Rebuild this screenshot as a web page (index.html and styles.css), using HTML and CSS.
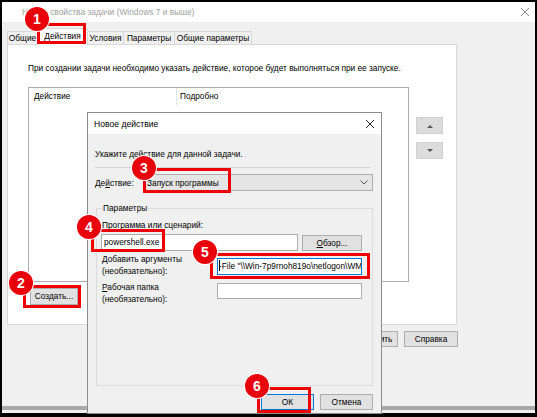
FILE: index.html
```html
<!DOCTYPE html>
<html lang="ru">
<head>
<meta charset="utf-8">
<title>Новое действие</title>
<link rel="stylesheet" href="styles.css">
</head>
<body>
<div class="screen">
  <div class="win">
    <div class="titlebar">
      <span class="title">Новые свойства задачи (Windows 7 и выше)</span>
      <svg class="x" width="10" height="10" viewBox="0 0 10 10"><path d="M1 1L9 9M9 1L1 9" stroke="#8a8a8a" stroke-width="1"/></svg>
    </div>
    <div class="body">
      <div class="tabs">
        <div class="tab t1">Общие</div>
        <div class="tab t2 active">Действия</div>
        <div class="tab t3">Условия</div>
        <div class="tab t4">Параметры</div>
        <div class="tab t5">Общие параметры</div>
      </div>
      <div class="panel">
        <p class="hint">При создании задачи необходимо указать действие, которое будет выполняться при ее запуске.</p>
        <div class="panel-row">
          <div class="list">
            <div class="list-head">
              <span class="col1">Действие</span>
              <span class="col2">Подробно</span>
            </div>
          </div>
          <div class="arrows">
            <div class="arrow-btn"><svg width="6" height="4" viewBox="0 0 6 4"><path d="M0 4L3 1L6 4Z" fill="#555"/></svg></div>
            <div class="arrow-btn"><svg width="6" height="4" viewBox="0 0 6 4"><path d="M0 0L3 3L6 0Z" fill="#555"/></svg></div>
          </div>
        </div>
        <div class="create-row">
          <div class="btn create">Создать...</div>
        </div>
      </div>
      <div class="footer">
        <div class="btn fbtn">ОК</div>
        <div class="btn fbtn">Отмена</div>
        <div class="btn fbtn">Применить</div>
        <div class="btn fbtn">Справка</div>
      </div>
      <div class="spacer"></div>
      <div class="band"></div>
    </div>
  </div>

  <div class="dialog">
    <div class="dlg-title">
      <span>Новое действие</span>
      <svg width="10" height="10" viewBox="0 0 10 10"><path d="M1 1L9 9M9 1L1 9" stroke="#222" stroke-width="1"/></svg>
    </div>
    <div class="dlg-body">
      <p class="instr">Укажите действие для данной задачи.</p>
      <div class="sep"></div>
      <div class="action-row">
        <span class="action-label">Де<u>й</u>ствие:</span>
        <div class="combo">
          <span>Запуск программы</span>
          <svg width="8" height="5" viewBox="0 0 8 5"><path d="M0.5 0.5L4 4L7.5 0.5" stroke="#555" fill="none" stroke-width="1"/></svg>
        </div>
      </div>
      <fieldset class="group">
        <legend>Параметры</legend>
        <div class="lbl">Программа или сценарий:</div>
        <div class="prog-row">
          <div class="input in1">powershell.exe</div>
          <div class="btn browse"><u>О</u>бзор...</div>
        </div>
        <div class="arg-row">
          <div class="lbl2"><u>Д</u>обавить аргументы<br>(необязательно):</div>
          <div class="input in2"><span class="caret"></span>-File "\\Win-7p9rnoh819o\netlogon\WM</div>
        </div>
        <div class="work-row">
          <div class="lbl2"><u>Р</u>абочая папка<br>(необязательно):</div>
          <div class="input in3"></div>
        </div>
      </fieldset>
      <div class="dlg-footer">
        <div class="btn ok">ОК</div>
        <div class="btn cancel">Отмена</div>
      </div>
    </div>
  </div>

  <div class="mark m1"></div>
  <div class="mark m2"></div>
  <div class="mark m3"></div>
  <div class="mark m4"></div>
  <div class="mark m5"></div>
  <div class="mark m6"></div>

  <div class="badge b1">1</div>
  <div class="badge b2">2</div>
  <div class="badge b3">3</div>
  <div class="badge b4">4</div>
  <div class="badge b5">5</div>
  <div class="badge b6">6</div>
</div>
</body>
</html>
```

FILE: styles.css
```css
* { box-sizing: border-box; margin: 0; padding: 0; }
html, body { width: 537px; height: 417px; overflow: hidden; }
body {
  background: #000;
  font-family: "Liberation Sans", Arial, sans-serif;
  font-size: 8.3px;
  color: #000;
}
u { text-decoration: underline; text-underline-offset: 1px; }

.screen {
  position: relative;
  width: 537px;
  height: 417px;
  padding: 2px 2px 4px 2px;
}
.win {
  height: 100%;
  background: #f0f0f0;
  display: flex;
  flex-direction: column;
}
.titlebar {
  height: 20px;
  flex: none;
  background: #fff;
  display: flex;
  align-items: center;
  justify-content: space-between;
  padding: 0 5px 0 20px;
  color: #a0a0a0;
  font-size: 8.4px;
}
.body {
  flex: 1;
  padding: 6px 0 0 5px;
  display: flex;
  flex-direction: column;
}

/* tabs */
.tabs {
  display: flex;
  align-items: flex-end;
  height: 16px;
  position: relative;
  z-index: 1;
}
.tab {
  height: 13px;
  line-height: 12px;
  border: 1px solid #d9d9d9;
  border-bottom: none;
  margin-right: -1px;
  background: #f0f0f0;
  text-align: center;
  white-space: nowrap;
}
.tab.t1 { width: 31px; }
.tab.t2 { width: 51px; }
.tab.t3 { width: 37px; }
.tab.t4 { width: 52px; }
.tab.t5 { width: 78px; }
.tab.active {
  line-height: 15px;
  background: #fff;
  margin-bottom: -1px;
  height: 17px;
}

.panel {
  width: 450px;
  height: 281px;
  background: #fff;
  border: 1px solid #d9d9d9;
  padding: 17px 0 0 20px;
  flex: none;
}
.hint { line-height: 12px; }
.panel-row {
  display: flex;
  margin-top: 13px;
}
.list {
  width: 381px;
  height: 195px;
  border: 1px solid #adadad;
  background: #fff;
}
.list-head {
  display: flex;
  height: 17px;
  line-height: 17px;
}
.col1 { width: 148px; padding-left: 5px; border-right: 1px solid #e5e5e5; }
.col2 { padding-left: 3px; }
.arrows {
  margin: 30px 0 0 7px;
  display: flex;
  flex-direction: column;
  gap: 8px;
}
.arrow-btn {
  width: 27px;
  height: 17px;
  background: #dcdcdc;
  border: 1px solid #d0d0d0;
  display: flex;
  align-items: center;
  justify-content: center;
}
.create-row {
  display: flex;
  margin-top: 6px;
  margin-left: 2px;
}

.btn {
  height: 17px;
  line-height: 15px;
  background: #e1e1e1;
  border: 1px solid #adadad;
  text-align: center;
  padding: 0 3px;
  white-space: nowrap;
}
.create { width: 48px; }

.footer {
  display: flex;
  justify-content: flex-end;
  gap: 6px;
  width: 451px;
  margin-top: 6px;
}
.fbtn { width: 54px; height: 16px; line-height: 14px; }
.spacer { flex: 1; }
.band {
  height: 4px;
  background: #a8a8a8;
  margin-left: -5px;
  margin-bottom: 3px;
}

/* dialog */
.dialog {
  position: absolute;
  left: 87px;
  top: 112px;
  width: 295px;
  height: 302px;
  background: #f0f0f0;
  border: 1px solid #8c8c8c;
  display: flex;
  flex-direction: column;
  z-index: 2;
}
.dlg-title {
  height: 21px;
  flex: none;
  background: #fff;
  display: flex;
  align-items: center;
  justify-content: space-between;
  padding: 0 6px 0 6px;
  font-size: 8.6px;
}
.dlg-body {
  flex: 1;
  padding: 14px 0 0 7px;
  display: flex;
  flex-direction: column;
}
.instr { line-height: 12px; }
.sep {
  margin-top: 7px;
  width: 275px;
  border-top: 1px solid #d4d4d4;
}
.action-row {
  display: flex;
  align-items: center;
  margin-top: 6px;
}
.action-label { width: 48px; }
.combo {
  width: 230px;
  height: 17px;
  background: #e5e5e5;
  border: 1px solid #adadad;
  display: flex;
  align-items: center;
  justify-content: space-between;
  padding: 0 4px 0 3px;
}
.group {
  margin: 11px 0 0 1px;
  width: 277px;
  height: 184px;
  border: 1px solid #dcdcdc;
  padding: 5px 0 0 5px;
}
.group legend {
  padding: 0 1px;
  line-height: 12px;
}
.lbl { line-height: 12px; }
.prog-row {
  display: flex;
  margin-top: 3px;
  margin-left: -1px;
}
.input {
  height: 17px;
  background: #fff;
  border: 1px solid #adadad;
  line-height: 15px;
  padding-left: 2px;
  white-space: nowrap;
  overflow: hidden;
}
.in1 { width: 197px; }
.browse { width: 60px; height: 16px; line-height: 14px; margin: 1px 0 0 4px; }
.arg-row { display: flex; margin-top: 2px; }
.lbl2 { width: 115px; line-height: 12px; }
.in2 {
  width: 145px;
  margin-top: 5px;
  border-color: #0078d7;
  padding-left: 1px;
}
.caret {
  display: inline-block;
  width: 1px;
  height: 11px;
  background: #000;
  vertical-align: -2px;
  margin-right: -1px;
}
.work-row { display: flex; margin-top: 4px; }
.in3 { width: 145px; height: 16px; margin-top: 2px; }
.dlg-footer {
  display: flex;
  justify-content: flex-end;
  gap: 6px;
  padding-right: 8px;
  margin-top: 8px;
}
.ok, .cancel { width: 53px; height: 16px; line-height: 14px; }
.ok { border-color: #0078d7; }

/* annotations */
.mark {
  position: absolute;
  border: 3px solid #ee0000;
  z-index: 5;
}
.m1 { left: 37px; top: 23px; width: 49px; height: 21px; }
.m2 { left: 23px; top: 285px; width: 58px; height: 23px; }
.m3 { left: 143px; top: 168px; width: 88px; height: 25px; }
.m4 { left: 91px; top: 229px; width: 74px; height: 23px; }
.m5 { left: 210px; top: 253px; width: 160px; height: 26px; }
.m6 { left: 257px; top: 387px; width: 54px; height: 26px; }

.badge {
  position: absolute;
  width: 24px;
  height: 24px;
  border-radius: 50%;
  background: #e8000a;
  box-shadow: 0 0 0 1px #fff;
  color: #fff;
  font-family: "Liberation Sans", Arial, sans-serif;
  font-weight: bold;
  font-size: 14px;
  line-height: 24px;
  text-align: center;
  z-index: 6;
}
.b1 { left: 25px; top: 7px; }
.b2 { left: 9px; top: 271px; }
.b3 { left: 132px; top: 156px; }
.b4 { left: 77px; top: 215px; }
.b5 { left: 193px; top: 240px; }
.b6 { left: 245px; top: 374px; }
```
